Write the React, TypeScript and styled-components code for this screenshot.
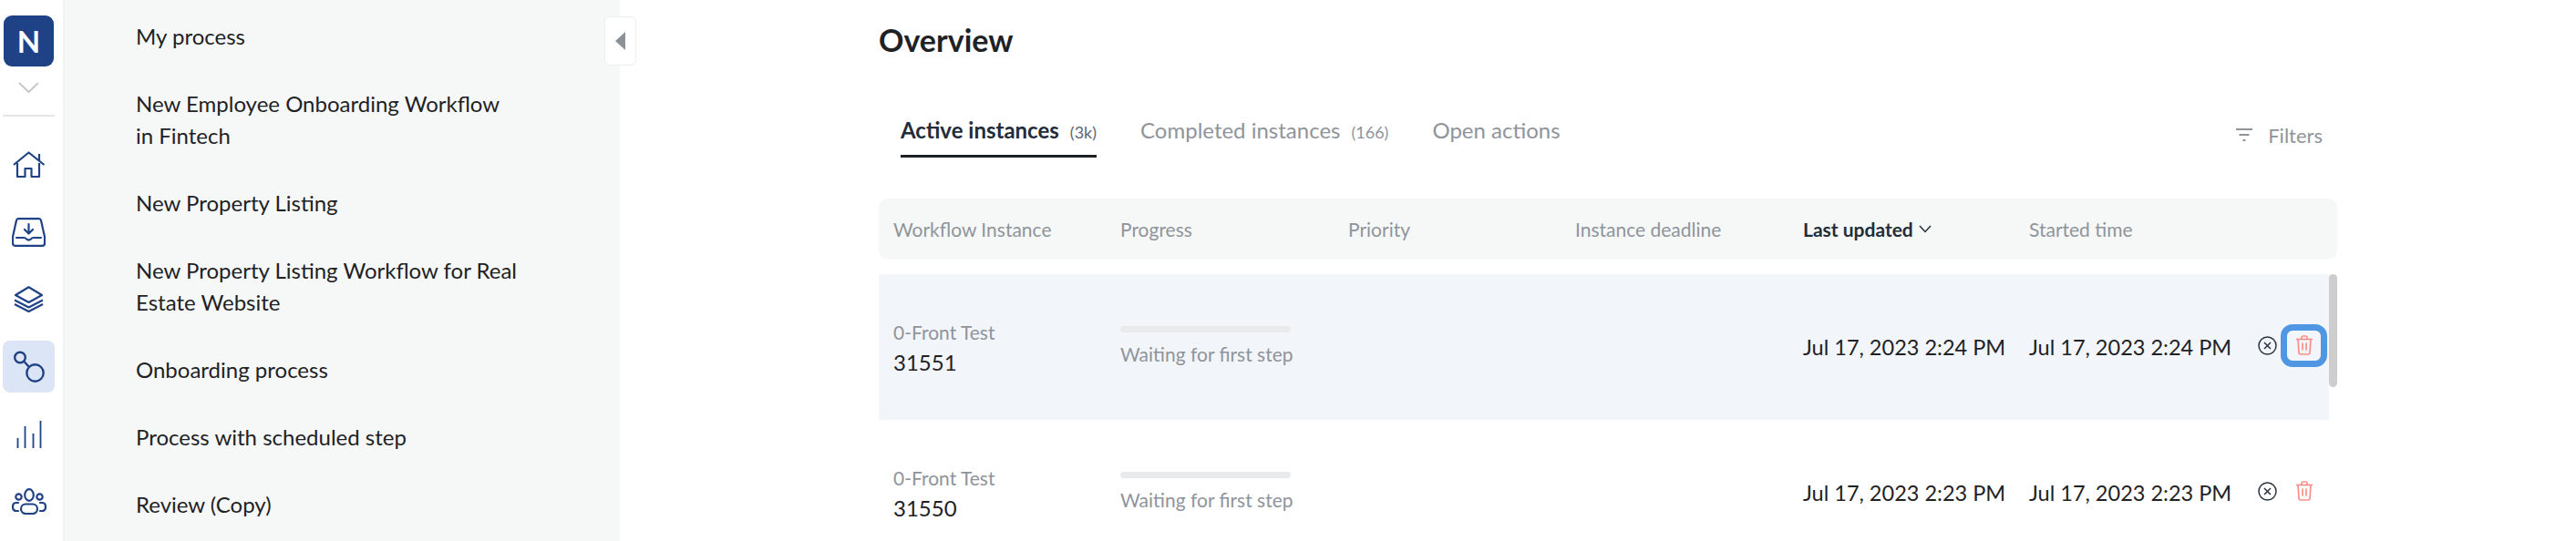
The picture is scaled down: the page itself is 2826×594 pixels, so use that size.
import React from 'react';
import styled, { createGlobalStyle } from 'styled-components';

const NAVY = '#1f4287';

const GlobalStyle = createGlobalStyle`
    html, body {
        margin: 0;
        padding: 0;
        background: #fff;
        font-family: 'Lato', sans-serif;
        overflow: hidden;
    }
    * { box-sizing: border-box; }
`

const Page = styled.div`
    display: flex;
    width: 2826px;
    height: 594px;
    overflow: hidden;
`

const Rail = styled.nav`
    width: 71px;
    flex: none;
    display: flex;
    flex-direction: column;
    align-items: flex-start;
    padding: 17px 0 0 3px;
    border-right: 2px solid #f0f2f3;
`

const Logo = styled.div`
    width: 55px;
    height: 56px;
    margin-left: 1px;
    display: flex;
    align-items: center;
    justify-content: center;
    border-radius: 9px;
    background: ${NAVY};
    color: #fff;
    font-size: 33px;
    font-weight: 700;
`

const LogoChevron = styled.svg`
    display: block;
    margin: 17px 0 0 17px;
`

const RailDivider = styled.div`
    width: 57px;
    height: 2px;
    margin-top: 24px;
    background: #e4e5e6;
`

const NavList = styled.div`
    display: flex;
    flex-direction: column;
    gap: 17px;
    margin-top: 24px;
`

const NavItem = styled.div<{ $active?: boolean }>`
    width: 57px;
    height: 57px;
    display: flex;
    align-items: center;
    justify-content: center;
    border-radius: 8px;
    background: ${props => props.$active ? '#dce5f5' : 'transparent'};
`

const SidePanel = styled.aside`
    position: relative;
    width: 609px;
    flex: none;
    height: 100%;
    padding-top: 2px;
    background: #f6f8f8;
`

const ProcessItem = styled.div`
    width: 422px;
    margin-left: 78px;
    padding: 19.5px 0;
    font-size: 24px;
    line-height: 35px;
    color: #1f2225;
`

const Collapse = styled.button`
    position: absolute;
    top: 18px;
    left: 592px;
    width: 35px;
    height: 54px;
    display: flex;
    align-items: center;
    justify-content: center;
    padding: 0;
    background: #fff;
    border: 1px solid #eceef0;
    border-radius: 6px;
`

const Main = styled.main`
    width: 1600px;
    margin-left: 284px;
    flex: none;
`

const Title = styled.h1`
    height: 90px;
    margin: 0;
    font-size: 34px;
    font-weight: 700;
    line-height: 88px;
    color: #1f2225;
`

const TabsRow = styled.div`
    height: 83px;
    display: flex;
    align-items: flex-end;
    padding-left: 24px;
`

const Tab = styled.div<{ $active?: boolean }>`
    height: 83px;
    display: flex;
    align-items: baseline;
    gap: 12px;
    padding-top: 35px;
    margin-right: 48px;
    font-size: 24px;
    line-height: 36px;
    font-weight: ${props => props.$active ? 700 : 400};
    color: ${props => props.$active ? '#232d3a' : '#8f949b'};
    border-bottom: 3px solid ${props => props.$active ? '#1f2225' : 'transparent'};
`

const TabCount = styled.span<{ $active?: boolean }>`
    font-size: 18px;
    font-weight: 400;
    color: ${props => props.$active ? '#5f6670' : '#8f949b'};
`

const Filters = styled.div`
    margin-left: auto;
    height: 83px;
    display: flex;
    align-items: center;
    gap: 17px;
    padding: 33px 16px 0 0;
    font-size: 22px;
    color: #8f949b;
`

const TableGrid = styled.div`
    display: grid;
    grid-template-columns: 249px 250px 249px 250px 248px 1fr;
    align-items: center;
    padding-left: 16px;
`

const TableHead = styled(TableGrid)`
    height: 67px;
    margin-top: 45px;
    border-radius: 10px;
    background: #f6f8f8;
    font-size: 21px;
    color: #8f949b;
`

const SortHead = styled.div`
    display: flex;
    align-items: center;
    gap: 6px;
    font-weight: 700;
    color: #232d3a;
`

const RowsArea = styled.div`
    position: relative;
    margin-top: 16px;
`

const Row = styled(TableGrid) <{ $highlight?: boolean }>`
    width: 1591px;
    height: 160px;
    background: ${props => props.$highlight ? '#f2f5fa' : 'transparent'};
`

const Scrollbar = styled.div`
    position: absolute;
    top: 0;
    right: 0;
    width: 9px;
    height: 124px;
    border-radius: 5px;
    background: #cdcdcd;
`

const WorkflowName = styled.div`
    font-size: 21px;
    line-height: 30px;
    color: #8f949b;
`

const InstanceId = styled.div`
    margin-top: 3px;
    font-size: 24px;
    line-height: 30px;
    color: #1f2225;
`

const ProgressCell = styled.div`
    display: inline-flex;
    flex-direction: column;
    align-items: stretch;
    width: 187px;
`

const ProgressTrack = styled.div`
    height: 7px;
    border-radius: 4px;
    background: #e8eaec;
`

const ProgressLabel = styled.div`
    margin-top: 9px;
    font-size: 21px;
    line-height: 30px;
    white-space: nowrap;
    color: #8f949b;
`

const DateCell = styled.div`
    font-size: 23.5px;
    white-space: nowrap;
    color: #1f2225;
`

const LastCell = styled.div`
    display: flex;
    align-items: center;
    justify-content: space-between;
    padding-right: 2px;
`

const Actions = styled.div`
    display: flex;
    align-items: center;
    gap: 3px;
    margin-top: -4px;
`

const IconSlot = styled.span`
    display: flex;
    width: 24px;
    justify-content: center;
`

const TrashButton = styled.button<{ $focused?: boolean }>`
    width: 51px;
    height: 47px;
    display: flex;
    align-items: center;
    justify-content: center;
    padding: 0;
    background: transparent;
    border: 7px solid ${props => props.$focused ? '#4f97e3' : 'transparent'};
    border-radius: 13px;
`

const HomeIcon = () => (
    <svg width="36" height="30" viewBox="0 0 36 30" fill="none" stroke={NAVY} strokeWidth="2.2" strokeLinejoin="round">
        <path d="M1 15 L17.5 1.5 L34.5 15" />
        <path d="M5 13 V28 H13.5 V19 H20.5 V28 H29 V13" />
        <path d="M29 3 V11" />
    </svg>
)

const InboxIcon = () => (
    <svg width="37" height="32" viewBox="0 0 37 32" fill="none" stroke={NAVY} strokeWidth="2.2" strokeLinecap="round" strokeLinejoin="round">
        <path d="M7 1.2 H30 Q31.5 1.2 32 3 L36 21 V28 Q36 30.800 33.500 30.800 H3.500 Q1 30.800 1 28 V21 L5 3 Q5.500 1.200 7 1.200 Z" />
        <path d="M18.500 7 V17 M14 13 L18.500 17.500 L23 13" />
        <path d="M5 22 H13 Q15 22 16 23.500 Q18.500 25.500 21 23.500 Q22 22 24 22 H32" />
    </svg>
)

const LayersIcon = () => (
    <svg width="33" height="29" viewBox="0 0 33 29" fill="none" stroke={NAVY} strokeWidth="2.2" strokeLinejoin="round">
        <path d="M16.500 1.300 L31 10 L16.500 18 L2 10 Z" />
        <path d="M1 15.500 L16.500 23.500 L32 15.500" />
        <path d="M1 20 L16.500 28 L32 20" />
    </svg>
)

const FlowIcon = () => (
    <svg width="34" height="35" viewBox="0 0 34 35" fill="none" stroke={NAVY} strokeWidth="2.400">
        <circle cx="7" cy="7.500" r="5.800" />
        <circle cx="23.500" cy="24.500" r="9.200" />
        <path d="M11.500 12 L17 18" />
    </svg>
)

const ChartIcon = () => (
    <svg width="28" height="30" viewBox="0 0 28 30" fill="none" stroke={NAVY} strokeWidth="1.800">
        <path d="M1.500 19 V30 M9.500 6 V30 M18.500 14 V30 M26.500 0 V30" />
    </svg>
)

const UsersIcon = () => (
    <svg width="38" height="29" viewBox="0 0 38 29" fill="none" stroke={NAVY} strokeWidth="2.200" strokeLinecap="round">
        <ellipse cx="19" cy="7.500" rx="4.800" ry="6.300" />
        <circle cx="7.500" cy="9.500" r="3.200" />
        <circle cx="30.500" cy="9.500" r="3.200" />
        <rect x="10" y="17.500" width="18" height="10.500" rx="5.200" />
        <path d="M7 16 H5 Q1 16 1 20.500 Q1 25 5 25 H7" />
        <path d="M31 16 H33 Q37 16 37 20.500 Q37 25 33 25 H31" />
    </svg>
)

const FilterIcon = () => (
    <svg width="18" height="14" viewBox="0 0 18 14" fill="none" stroke="#8f949b" strokeWidth="2">
        <path d="M0 1 H18 M3.500 7 H14.500 M7.500 13 H10.500" />
    </svg>
)

const CancelIcon = () => (
    <svg width="21" height="21" viewBox="0 0 21 21" fill="none" stroke="#2a3340" strokeWidth="1.500">
        <circle cx="10.500" cy="10.500" r="9.500" />
        <path d="M7 7 L14 14 M14 7 L7 14" />
    </svg>
)

const TrashIcon = () => (
    <svg width="20" height="22" viewBox="0 0 20 22" fill="none" stroke="#f99087" strokeWidth="1.700" strokeLinejoin="round">
        <path d="M1 4.500 H19" />
        <path d="M7 4.500 V2.500 Q7 1 8.500 1 H11.500 Q13 1 13 2.500 V4.500" />
        <path d="M3 4.500 L4 19 Q4.200 21 6 21 H14 Q15.800 21 16 19 L17 4.500" />
        <path d="M8 8.500 V16.500 M12 8.500 V16.500" />
    </svg>
)

const processes = [
    'My process',
    'New Employee Onboarding Workflow in Fintech',
    'New Property Listing',
    'New Property Listing Workflow for Real Estate Website',
    'Onboarding process',
    'Process with scheduled step',
    'Review (Copy)',
]

const rows = [
    { id: '31551', date: 'Jul 17, 2023 2:24 PM', highlight: true },
    { id: '31550', date: 'Jul 17, 2023 2:23 PM', highlight: false },
]

export default function App() {
    return (
        <>
            <GlobalStyle />
            <Page>
                <Rail>
                    <Logo>N</Logo>
                    <LogoChevron width="23" height="12" viewBox="0 0 23 12" fill="none" stroke="#c5c8cb" strokeWidth="2">
                        <path d="M1 1 L11.500 11 L22 1" />
                    </LogoChevron>
                    <RailDivider />
                    <NavList>
                        <NavItem><HomeIcon /></NavItem>
                        <NavItem><InboxIcon /></NavItem>
                        <NavItem><LayersIcon /></NavItem>
                        <NavItem $active><FlowIcon /></NavItem>
                        <NavItem><ChartIcon /></NavItem>
                        <NavItem><UsersIcon /></NavItem>
                    </NavList>
                </Rail>
                <SidePanel>
                    {processes.map((name) => <ProcessItem key={name}>{name}</ProcessItem>)}
                    <Collapse>
                        <svg width="11" height="20" viewBox="0 0 11 20" fill="#8b9298"><path d="M11 0 V20 L0 10 Z" /></svg>
                    </Collapse>
                </SidePanel>
                <Main>
                    <Title>Overview</Title>
                    <TabsRow>
                        <Tab $active>Active instances <TabCount $active>(3k)</TabCount></Tab>
                        <Tab>Completed instances <TabCount>(166)</TabCount></Tab>
                        <Tab>Open actions</Tab>
                        <Filters><FilterIcon />Filters</Filters>
                    </TabsRow>
                    <TableHead>
                        <div>Workflow Instance</div>
                        <div>Progress</div>
                        <div>Priority</div>
                        <div>Instance deadline</div>
                        <SortHead>
                            Last updated
                            <svg width="14" height="9" viewBox="0 0 14 9" fill="none" stroke="#232d3a" strokeWidth="1.500"><path d="M1 1 L7 7.500 L13 1" /></svg>
                        </SortHead>
                        <div>Started time</div>
                    </TableHead>
                    <RowsArea>
                        {rows.map((row) => (
                            <Row key={row.id} $highlight={row.highlight}>
                                <div>
                                    <WorkflowName>0-Front Test</WorkflowName>
                                    <InstanceId>{row.id}</InstanceId>
                                </div>
                                <ProgressCell>
                                    <ProgressTrack />
                                    <ProgressLabel>Waiting for first step</ProgressLabel>
                                </ProgressCell>
                                <div />
                                <div />
                                <DateCell>{row.date}</DateCell>
                                <LastCell>
                                    <DateCell>{row.date}</DateCell>
                                    <Actions>
                                        <IconSlot><CancelIcon /></IconSlot>
                                        <TrashButton $focused={row.highlight}><TrashIcon /></TrashButton>
                                    </Actions>
                                </LastCell>
                            </Row>
                        ))}
                        <Scrollbar />
                    </RowsArea>
                </Main>
            </Page>
        </>
    );
}
